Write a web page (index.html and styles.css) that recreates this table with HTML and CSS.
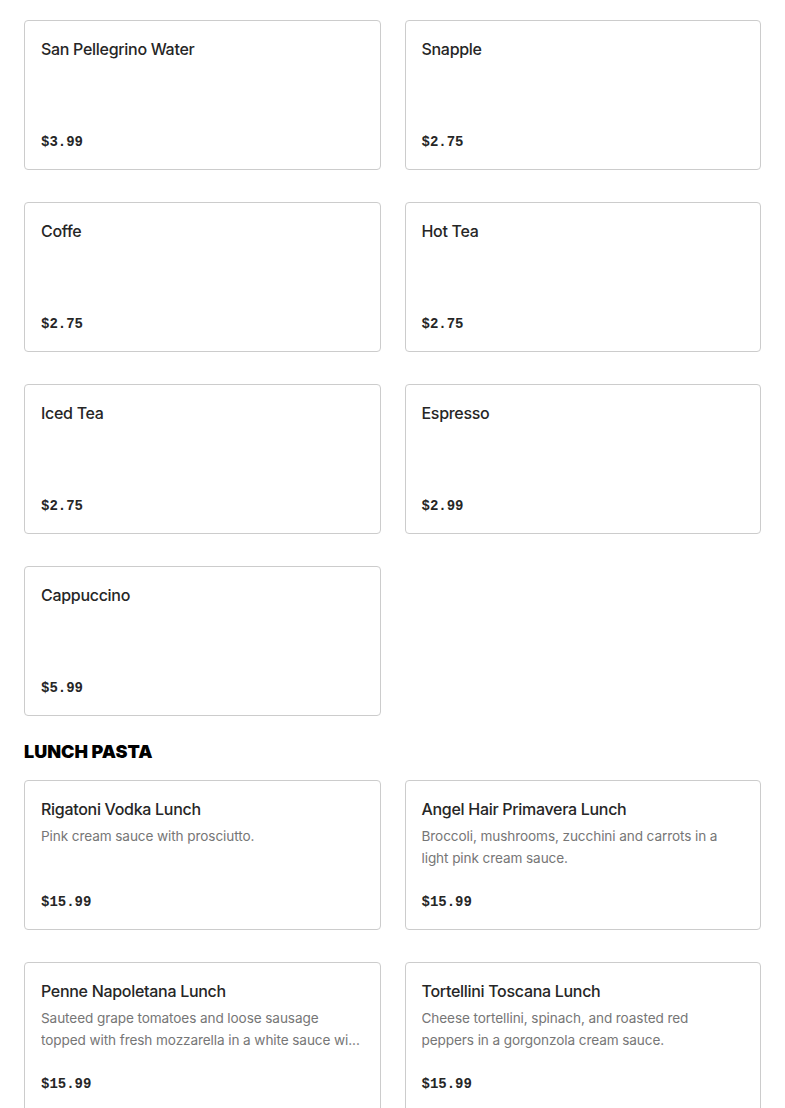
FILE: index.html
```html
<!DOCTYPE html>
<html>
<head>
<meta charset="utf-8">
<link rel="stylesheet" href="styles.css">
</head>
<body>
<main class="menu">
  <section class="grid">
    <div class="card"><div class="name">San Pellegrino Water</div><div class="price">$3.99</div></div>
    <div class="card"><div class="name">Snapple</div><div class="price">$2.75</div></div>
    <div class="card"><div class="name">Coffe</div><div class="price">$2.75</div></div>
    <div class="card"><div class="name">Hot Tea</div><div class="price">$2.75</div></div>
    <div class="card"><div class="name">Iced Tea</div><div class="price">$2.75</div></div>
    <div class="card"><div class="name">Espresso</div><div class="price">$2.99</div></div>
    <div class="card"><div class="name">Cappuccino</div><div class="price">$5.99</div></div>
  </section>
  <h2 class="section-title">LUNCH PASTA</h2>
  <section class="grid">
    <div class="card"><div class="name">Rigatoni Vodka Lunch</div><div class="desc">Pink cream sauce with prosciutto.</div><div class="price">$15.99</div></div>
    <div class="card"><div class="name">Angel Hair Primavera Lunch</div><div class="desc">Broccoli, mushrooms, zucchini and carrots in a light pink cream sauce.</div><div class="price">$15.99</div></div>
    <div class="card"><div class="name">Penne Napoletana Lunch</div><div class="desc">Sauteed grape tomatoes and loose sausage topped with fresh mozzarella in a white sauce wi...</div><div class="price">$15.99</div></div>
    <div class="card"><div class="name">Tortellini Toscana Lunch</div><div class="desc">Cheese tortellini, spinach, and roasted red peppers in a gorgonzola cream sauce.</div><div class="price">$15.99</div></div>
  </section>
</main>
</body>
</html>
```

FILE: styles.css
```css
html, body {
  margin: 0;
  padding: 0;
  background: #fff;
}
body {
  font-family: Inter, "Noto Sans", sans-serif;
  color: #242424;
}
.menu {
  padding: 20px 24px 0 24px;
}
.grid {
  display: grid;
  grid-template-columns: 1fr 1fr;
  column-gap: 24px;
  row-gap: 32px;
}
.card {
  box-sizing: border-box;
  height: 150px;
  border: 1px solid #cccccc;
  border-radius: 4px;
  padding: 16px;
  display: flex;
  flex-direction: column;
}
.name {
  font-size: 16px;
  line-height: 24px;
  font-weight: 500;
  color: #262626;
  letter-spacing: -0.3px;
}
.desc {
  margin-top: 4px;
  font-size: 13.6px;
  line-height: 22px;
  letter-spacing: -0.1px;
  color: #767676;
  max-height: 44px;
  overflow: hidden;
}
.price {
  margin-top: auto;
  font-family: "Liberation Mono", "DejaVu Sans Mono", monospace;
  font-weight: 700;
  font-size: 14px;
  line-height: 22px;
  color: #262626;
  padding-top: 1px;
}
.section-title {
  margin: 24px 0 16px 0;
  font-size: 18px;
  line-height: 24px;
  font-weight: 900;
  color: #000;
  letter-spacing: 0;
}
```
